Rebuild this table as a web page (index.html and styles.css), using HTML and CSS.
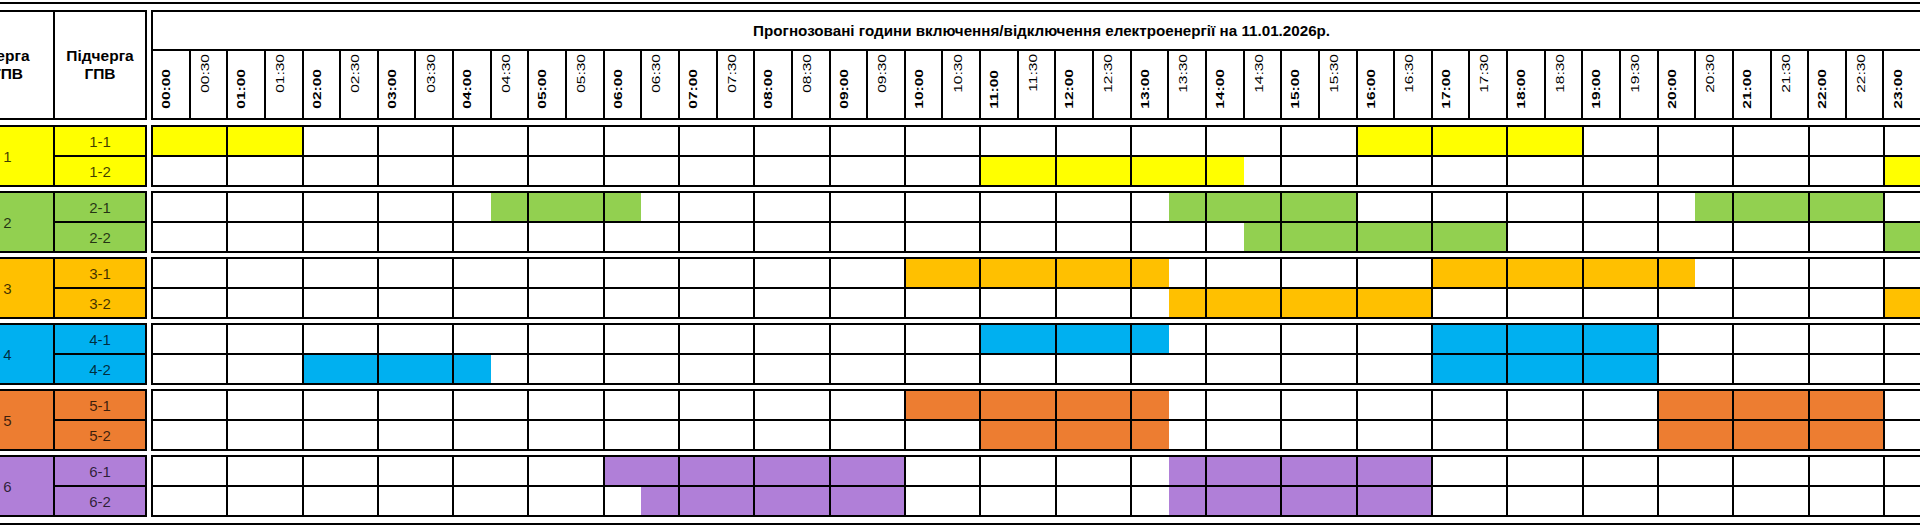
FILE: index.html
```html
<!DOCTYPE html>
<html lang="uk">
<head>
<meta charset="utf-8">
<title>Графік погодинних відключень</title>
<link rel="stylesheet" href="styles.css">
</head>
<body>
<div class="sheet">
  <div class="band head">
    <div class="left left-head">
      <div class="lh">Черга<br>ГПВ</div>
      <div class="lh">Підчерга<br>ГПВ</div>
    </div>
    <div class="right">
      <div class="title">Прогнозовані години включення/відключення електроенергії на 11.01.2026р.</div>
      <div class="times">
        <div class="t hr"><span>00:00</span></div><div class="t hh"><span>00:30</span></div>
        <div class="t hr"><span>01:00</span></div><div class="t hh"><span>01:30</span></div>
        <div class="t hr"><span>02:00</span></div><div class="t hh"><span>02:30</span></div>
        <div class="t hr"><span>03:00</span></div><div class="t hh"><span>03:30</span></div>
        <div class="t hr"><span>04:00</span></div><div class="t hh"><span>04:30</span></div>
        <div class="t hr"><span>05:00</span></div><div class="t hh"><span>05:30</span></div>
        <div class="t hr"><span>06:00</span></div><div class="t hh"><span>06:30</span></div>
        <div class="t hr"><span>07:00</span></div><div class="t hh"><span>07:30</span></div>
        <div class="t hr"><span>08:00</span></div><div class="t hh"><span>08:30</span></div>
        <div class="t hr"><span>09:00</span></div><div class="t hh"><span>09:30</span></div>
        <div class="t hr"><span>10:00</span></div><div class="t hh"><span>10:30</span></div>
        <div class="t hr"><span>11:00</span></div><div class="t hh"><span>11:30</span></div>
        <div class="t hr"><span>12:00</span></div><div class="t hh"><span>12:30</span></div>
        <div class="t hr"><span>13:00</span></div><div class="t hh"><span>13:30</span></div>
        <div class="t hr"><span>14:00</span></div><div class="t hh"><span>14:30</span></div>
        <div class="t hr"><span>15:00</span></div><div class="t hh"><span>15:30</span></div>
        <div class="t hr"><span>16:00</span></div><div class="t hh"><span>16:30</span></div>
        <div class="t hr"><span>17:00</span></div><div class="t hh"><span>17:30</span></div>
        <div class="t hr"><span>18:00</span></div><div class="t hh"><span>18:30</span></div>
        <div class="t hr"><span>19:00</span></div><div class="t hh"><span>19:30</span></div>
        <div class="t hr"><span>20:00</span></div><div class="t hh"><span>20:30</span></div>
        <div class="t hr"><span>21:00</span></div><div class="t hh"><span>21:30</span></div>
        <div class="t hr"><span>22:00</span></div><div class="t hh"><span>22:30</span></div>
        <div class="t hr"><span>23:00</span></div><div class="t hh"><span>23:30</span></div>
      </div>
    </div>
  </div>

  <div class="band grp g1">
    <div class="left"><div class="q">1</div><div class="sq">1-1</div><div class="sq">1-2</div></div>
    <div class="right data">
      <i class="f"></i><i class="f"></i><i></i><i></i><i></i><i></i><i></i><i></i><i></i><i></i><i></i><i></i><i></i><i></i><i></i><i></i><i class="f"></i><i class="f"></i><i class="f"></i><i></i><i></i><i></i><i></i><i></i>
      <i></i><i></i><i></i><i></i><i></i><i></i><i></i><i></i><i></i><i></i><i></i><i class="f"></i><i class="f"></i><i class="f"></i><i class="a"></i><i></i><i></i><i></i><i></i><i></i><i></i><i></i><i></i><i class="f"></i>
    </div>
  </div>

  <div class="band grp g2">
    <div class="left"><div class="q">2</div><div class="sq">2-1</div><div class="sq">2-2</div></div>
    <div class="right data">
      <i></i><i></i><i></i><i></i><i class="b"></i><i class="f"></i><i class="a"></i><i></i><i></i><i></i><i></i><i></i><i></i><i class="b"></i><i class="f"></i><i class="f"></i><i></i><i></i><i></i><i></i><i class="b"></i><i class="f"></i><i class="f"></i><i></i>
      <i></i><i></i><i></i><i></i><i></i><i></i><i></i><i></i><i></i><i></i><i></i><i></i><i></i><i></i><i class="b"></i><i class="f"></i><i class="f"></i><i class="f"></i><i></i><i></i><i></i><i></i><i></i><i class="f"></i>
    </div>
  </div>

  <div class="band grp g3">
    <div class="left"><div class="q">3</div><div class="sq">3-1</div><div class="sq">3-2</div></div>
    <div class="right data">
      <i></i><i></i><i></i><i></i><i></i><i></i><i></i><i></i><i></i><i></i><i class="f"></i><i class="f"></i><i class="f"></i><i class="a"></i><i></i><i></i><i></i><i class="f"></i><i class="f"></i><i class="f"></i><i class="a"></i><i></i><i></i><i></i>
      <i></i><i></i><i></i><i></i><i></i><i></i><i></i><i></i><i></i><i></i><i></i><i></i><i></i><i class="b"></i><i class="f"></i><i class="f"></i><i class="f"></i><i></i><i></i><i></i><i></i><i></i><i></i><i class="f"></i>
    </div>
  </div>

  <div class="band grp g4">
    <div class="left"><div class="q">4</div><div class="sq">4-1</div><div class="sq">4-2</div></div>
    <div class="right data">
      <i></i><i></i><i></i><i></i><i></i><i></i><i></i><i></i><i></i><i></i><i></i><i class="f"></i><i class="f"></i><i class="a"></i><i></i><i></i><i></i><i class="f"></i><i class="f"></i><i class="f"></i><i></i><i></i><i></i><i></i>
      <i></i><i></i><i class="f"></i><i class="f"></i><i class="a"></i><i></i><i></i><i></i><i></i><i></i><i></i><i></i><i></i><i></i><i></i><i></i><i></i><i class="f"></i><i class="f"></i><i class="f"></i><i></i><i></i><i></i><i></i>
    </div>
  </div>

  <div class="band grp g5">
    <div class="left"><div class="q">5</div><div class="sq">5-1</div><div class="sq">5-2</div></div>
    <div class="right data">
      <i></i><i></i><i></i><i></i><i></i><i></i><i></i><i></i><i></i><i></i><i class="f"></i><i class="f"></i><i class="f"></i><i class="a"></i><i></i><i></i><i></i><i></i><i></i><i></i><i class="f"></i><i class="f"></i><i class="f"></i><i></i>
      <i></i><i></i><i></i><i></i><i></i><i></i><i></i><i></i><i></i><i></i><i></i><i class="f"></i><i class="f"></i><i class="a"></i><i></i><i></i><i></i><i></i><i></i><i></i><i class="f"></i><i class="f"></i><i class="f"></i><i></i>
    </div>
  </div>

  <div class="band grp g6">
    <div class="left"><div class="q">6</div><div class="sq">6-1</div><div class="sq">6-2</div></div>
    <div class="right data">
      <i></i><i></i><i></i><i></i><i></i><i></i><i class="f"></i><i class="f"></i><i class="f"></i><i class="f"></i><i></i><i></i><i></i><i class="b"></i><i class="f"></i><i class="f"></i><i class="f"></i><i></i><i></i><i></i><i></i><i></i><i></i><i></i>
      <i></i><i></i><i></i><i></i><i></i><i></i><i class="b"></i><i class="f"></i><i class="f"></i><i class="f"></i><i></i><i></i><i></i><i class="b"></i><i class="f"></i><i class="f"></i><i class="f"></i><i></i><i></i><i></i><i></i><i></i><i></i><i></i>
    </div>
  </div>
</div>
</body>
</html>
```

FILE: styles.css
```css
* {
  box-sizing: border-box;
  margin: 0;
  padding: 0;
}

html,
body {
  overflow: hidden;
  background: #fff;
}

body {
  width: 1920px;
  height: 530px;
  font-family: "Liberation Sans", Arial, sans-serif;
  color: #000;
}

/* whole sheet, scrolled slightly to the right so the first column is cut */
.sheet {
  display: flex;
  flex-direction: column;
  gap: 4px;
  width: max-content;
  margin: 2px 0 0 -48px;
  padding: 6px;
  border: 2px solid #000;
}

.band {
  display: flex;
  gap: 4px;
}

.head {
  margin-bottom: 1px;
}

/* left block: queue / sub-queue */
.left {
  display: grid;
  grid-template-columns: 93px 92px;
  width: 187px;
  border-top: 2px solid #000;
  border-left: 2px solid #000;
}

.left > div {
  display: flex;
  align-items: center;
  justify-content: center;
  text-align: center;
  border-right: 2px solid #000;
  border-bottom: 2px solid #000;
}

.left-head {
  grid-template-rows: 108px;
}

.lh {
  font-weight: 700;
  font-size: 15.5px;
  line-height: 18px;
}

.grp .left {
  grid-template-rows: 30px 30px;
  background: var(--c);
}

.q {
  grid-row: span 2;
}

.q,
.sq {
  font-size: 15px;
  color: rgba(0, 0, 0, 0.75);
}

/* right block: timeline */
.right {
  border-top: 2px solid #000;
  border-left: 2px solid #000;
}

.title {
  display: flex;
  align-items: center;
  justify-content: center;
  width: 1807.2px;
  height: 39px;
  padding-right: 28px;
  border-right: 2px solid #000;
  border-bottom: 2px solid #000;
  font-weight: 700;
  font-size: 15.2px;
}

.times {
  display: grid;
  grid-template-columns: repeat(48, 37.65px);
  height: 69px;
}

.t {
  display: flex;
  flex-direction: column;
  align-items: center;
  border-right: 2px solid #000;
  border-bottom: 2px solid #000;
}

.t span {
  writing-mode: vertical-rl;
  transform: rotate(180deg) scaleX(0.7);
  font-size: 15.5px;
  line-height: 1;
  white-space: nowrap;
}

.t.hr {
  justify-content: flex-end;
  padding: 0 8px 9px 0;
  font-weight: 700;
}

.t.hh {
  justify-content: flex-start;
  padding: 3px 6px 0 0;
}

.data {
  display: grid;
  grid-template-columns: repeat(24, 75.3px);
  grid-template-rows: 30px 30px;
}

.data > i {
  border-right: 2px solid #000;
  border-bottom: 2px solid #000;
}

.data > i.f {
  background: var(--c);
}

.data > i.a {
  background: linear-gradient(90deg, var(--c) 50%, #fff 50%);
}

.data > i.b {
  background: linear-gradient(90deg, #fff 50%, var(--c) 50%);
}

.g1 { --c: #ffff00; }
.g2 { --c: #92d050; }
.g3 { --c: #ffc000; }
.g4 { --c: #00b0f0; }
.g5 { --c: #ed7d31; }
.g6 { --c: #b07fd8; }
```
